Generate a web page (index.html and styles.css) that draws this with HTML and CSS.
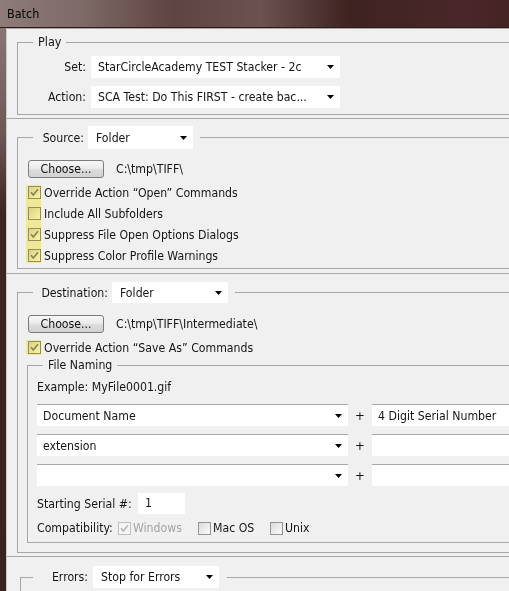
FILE: index.html
```html
<!DOCTYPE html>
<html lang="en">
<head>
<meta charset="utf-8">
<title>Batch</title>
<link rel="stylesheet" href="styles.css">
</head>
<body>
<div class="window">
  <div class="titlebar">Batch</div>
  <div class="frame">
    <main class="client">

      <section class="panel panel-play">
        <fieldset class="group group-play">
          <legend class="legend legend-play">Play</legend>
          <div class="play-grid">
            <span class="lbl">Set:</span>
            <div class="select select-play"><span class="val">StarCircleAcademy TEST Stacker - 2c</span><svg class="arrow" viewBox="0 0 7 4"><path d="M0 0H7L3.5 4Z"/></svg></div>
            <span class="lbl">Action:</span>
            <div class="select select-play"><span class="val">SCA Test: Do This FIRST - create bac...</span><svg class="arrow" viewBox="0 0 7 4"><path d="M0 0H7L3.5 4Z"/></svg></div>
          </div>
        </fieldset>
      </section>

      <section class="panel panel-source">
        <fieldset class="group group-source">
          <legend class="legend legend-ctl">
            <span class="lbl lbl-source">Source:</span>
            <span class="select select-source"><span class="val">Folder</span><svg class="arrow" viewBox="0 0 7 4"><path d="M0 0H7L3.5 4Z"/></svg></span>
          </legend>
          <div class="choose-row"><button class="btn" type="button">Choose...</button><span class="path">C:\tmp\TIFF\</span></div>
          <div class="checklist hl">
            <div class="check"><span class="cb"><svg viewBox="0 0 11 11"><path d="M2 5.2L4.3 8L9 2.3"/></svg></span><span>Override Action “Open” Commands</span></div>
            <div class="check"><span class="cb"></span><span>Include All Subfolders</span></div>
            <div class="check"><span class="cb"><svg viewBox="0 0 11 11"><path d="M2 5.2L4.3 8L9 2.3"/></svg></span><span>Suppress File Open Options Dialogs</span></div>
            <div class="check"><span class="cb"><svg viewBox="0 0 11 11"><path d="M2 5.2L4.3 8L9 2.3"/></svg></span><span>Suppress Color Profile Warnings</span></div>
          </div>
        </fieldset>
      </section>

      <section class="panel panel-dest">
        <fieldset class="group group-dest">
          <legend class="legend legend-ctl">
            <span class="lbl lbl-dest">Destination:</span>
            <span class="select select-dest"><span class="val">Folder</span><svg class="arrow" viewBox="0 0 7 4"><path d="M0 0H7L3.5 4Z"/></svg></span>
          </legend>
          <div class="choose-row"><button class="btn" type="button">Choose...</button><span class="path">C:\tmp\TIFF\Intermediate\</span></div>
          <div class="checklist hl">
            <div class="check"><span class="cb"><svg viewBox="0 0 11 11"><path d="M2 5.2L4.3 8L9 2.3"/></svg></span><span>Override Action “Save As” Commands</span></div>
          </div>

          <fieldset class="group group-naming">
            <legend class="legend legend-naming">File Naming</legend>
            <div class="example">Example: MyFile0001.gif</div>
            <div class="name-rows">
              <div class="name-row">
                <div class="select field"><span class="val">Document Name</span><svg class="arrow" viewBox="0 0 7 4"><path d="M0 0H7L3.5 4Z"/></svg></div>
                <span class="plus">+</span>
                <div class="select field field-2"><span class="val">4 Digit Serial Number</span></div>
              </div>
              <div class="name-row">
                <div class="select field"><span class="val">extension</span><svg class="arrow" viewBox="0 0 7 4"><path d="M0 0H7L3.5 4Z"/></svg></div>
                <span class="plus">+</span>
                <div class="select field field-2"><span class="val"></span></div>
              </div>
              <div class="name-row">
                <div class="select field"><span class="val"></span><svg class="arrow" viewBox="0 0 7 4"><path d="M0 0H7L3.5 4Z"/></svg></div>
                <span class="plus">+</span>
                <div class="select field field-2"><span class="val"></span></div>
              </div>
            </div>
            <div class="serial-row">
              <span class="serial-lbl">Starting Serial #:</span>
              <span class="serial-input">1</span>
            </div>
            <div class="compat-row">
              <span class="compat-lbl">Compatibility:</span>
              <span class="check compat-item compat-win disabled"><span class="cb"><svg viewBox="0 0 11 11"><path d="M2 5.2L4.3 8L9 2.3"/></svg></span><span>Windows</span></span>
              <span class="check compat-item compat-mac"><span class="cb"></span><span>Mac OS</span></span>
              <span class="check compat-item"><span class="cb"></span><span>Unix</span></span>
            </div>
          </fieldset>
        </fieldset>
      </section>

      <section class="panel panel-errors">
        <fieldset class="group group-errors">
          <legend class="legend legend-ctl legend-errors">
            <span class="lbl lbl-errors">Errors:</span>
            <span class="select select-errors"><span class="val">Stop for Errors</span><svg class="arrow" viewBox="0 0 7 4"><path d="M0 0H7L3.5 4Z"/></svg></span>
          </legend>
          <div class="errors-body"></div>
        </fieldset>
      </section>

    </main>
  </div>
</div>
</body>
</html>
```
FILE: styles.css
```css
* { box-sizing: border-box; }
html, body { margin: 0; padding: 0; }
body {
  width: 509px;
  height: 591px;
  overflow: hidden;
  background: #3d2524;
  font-family: "DejaVu Sans Condensed", "DejaVu Sans", "Liberation Sans", sans-serif;
  font-stretch: condensed;
  font-size: 12.2px;
  color: #151515;
}
.window {
  width: 580px;
  height: 591px;
  display: flex;
  flex-direction: column;
}
.titlebar {
  height: 28px;
  flex: none;
  padding-left: 7px;
  display: flex;
  align-items: center;
  font-size: 12.5px;
  color: #000;
  background: linear-gradient(90deg, #8d7c7a 0%, #7e6a68 14%, #5e4442 30%, #6b5351 45%, #3e2321 60%, #4a272a 80%, #3b1d1d 100%);
  border-bottom: 1px solid #2d1b1a;
}
.frame {
  flex: 1;
  display: flex;
  padding-left: 6px;
  background: linear-gradient(180deg, #887674 0%, #6e5856 18%, #3e2423 32%, #3b2221 100%);
}
.client {
  flex: 1;
  background: #f0f0f0;
  border-left: 1px solid #c8c8c8;
}

/* panels */
.panel {
  padding-left: 10px;
  border-bottom: 1px solid #a6a6a6;
}
.panel-play { border-top: 1px solid #a6a6a6; padding-top: 6px; padding-bottom: 3px; }
.panel-source { padding-top: 7px; padding-bottom: 4px; }
.panel-dest { padding-top: 8px; padding-bottom: 3px; }
.panel-errors { padding-top: 9px; padding-left: 13px; border-bottom: none; }

.group {
  margin: 0;
  min-width: 0;
  border: 1px solid #a6a6a6;
  padding: 0;
}
.legend {
  padding: 0 5px;
  line-height: 14px;
}
.legend-play { margin-left: 15px; font-size: 12.5px; }
.legend-ctl {
  display: flex;
  align-items: center;
  padding: 0 7px 0 0;
  margin-left: 5px;
}
.legend-errors { margin-left: 2px; padding-right: 8px; }
.lbl { text-align: right; white-space: nowrap; }
.lbl-source { width: 51px; margin-right: 4px; }
.lbl-dest { width: 75px; margin-right: 4px; }
.lbl-errors { width: 55px; margin-right: 5px; }

/* selects */
.select {
  display: flex;
  align-items: center;
  justify-content: space-between;
  background: #fff;
  padding: 0 6px 0 7px;
  white-space: nowrap;
  overflow: hidden;
}
.arrow { width: 7px; height: 4px; flex: none; fill: #000; }
.select-play { height: 22px; }
.select-source { width: 105px; height: 23px; padding-left: 8px; }
.select-dest { width: 116px; height: 21px; padding-left: 8px; }
.select-errors { width: 126px; height: 22px; padding-left: 8px; }

/* play */
.group-play { padding: 7px 0 6px 0; }
.play-grid {
  display: grid;
  grid-template-columns: 68px 249px;
  column-gap: 5px;
  row-gap: 8px;
  align-items: center;
}

/* source */
.group-source { padding: 11px 0 2px 10px; }
.choose-row { display: flex; align-items: center; gap: 12px; height: 18px; }
.btn {
  width: 76px;
  height: 18px;
  padding: 0;
  font: inherit;
  color: #111;
  border: 1px solid #7c7c7c;
  border-radius: 3px;
  background: linear-gradient(180deg, #f7f7f7 0%, #ebebeb 45%, #dcdcdc 55%, #d2d2d2 100%);
}
.checklist { margin-top: 4px; }
.hl { position: relative; }
.hl::after {
  content: "";
  position: absolute;
  left: -2px;
  top: 3px;
  bottom: 3px;
  width: 15px;
  background: #fff7a0;
  mix-blend-mode: multiply;
  pointer-events: none;
}
.check { display: flex; align-items: center; gap: 3px; height: 21px; }
.cb {
  width: 13px;
  height: 13px;
  flex: none;
  border: 1px solid #939494;
  background: linear-gradient(135deg, #d9d9d9 0%, #ededed 55%, #fbfbfb 100%);
  display: flex;
  align-items: center;
  justify-content: center;
}
.cb svg { width: 11px; height: 11px; fill: none; stroke: #858585; stroke-width: 1.6; }
.disabled { color: #a3a3a3; }
.disabled .cb { border-color: #c0c0c0; background: #f4f4f4; }
.disabled .cb svg { stroke: #b8b8b8; }

/* destination */
.group-dest { padding: 12px 0 9px 10px; }
.group-naming { margin-left: -1px; padding: 7px 0 6px 9px; }
.legend-naming { margin-left: 6px; padding: 0 5px; }
.example { height: 16px; line-height: 16px; }
.name-rows { margin-top: 9px; display: flex; flex-direction: column; gap: 8px; }
.name-row { display: grid; grid-template-columns: 311px 24px 220px; align-items: center; }
.field { height: 22px; border-top: 1px solid #a9a9a9; padding-left: 6px; }
.plus { text-align: center; font-size: 13px; }
.serial-row { margin-top: 7px; display: flex; align-items: center; height: 21px; }
.serial-lbl { width: 101px; }
.serial-input { width: 47px; height: 21px; background: #fff; padding-left: 7px; line-height: 21px; }
.compat-row { margin-top: 6px; display: flex; align-items: center; height: 16px; }
.compat-lbl { width: 81px; }
.compat-item { height: 16px; gap: 2px; }
.compat-win { width: 80px; }
.compat-mac { width: 72px; }

/* errors */
.group-errors { padding: 0 0 0 10px; }
.errors-body { height: 20px; }
```
